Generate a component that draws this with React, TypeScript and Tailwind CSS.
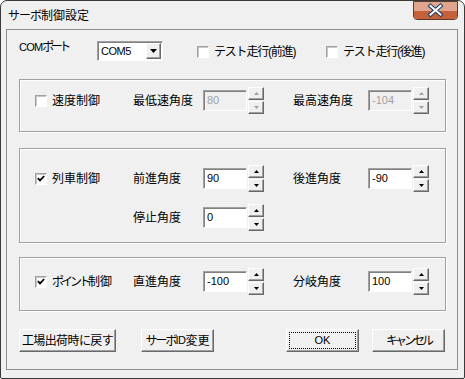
import React from 'react'

const font = "font-['Liberation_Sans','Noto_Sans_CJK_JP',sans-serif]"

const Arrow = ({ up, disabled }: { up?: boolean; disabled?: boolean }) => (
  <svg width="5" height="3" viewBox="0 0 5 3">
    <polygon
      points={up ? '2.5,0 5,3 0,3' : '0,0 5,0 2.5,3'}
      fill={disabled ? '#a0a0a0' : '#000'}
    />
  </svg>
)

const SpinButton = ({ up, disabled }: { up?: boolean; disabled?: boolean }) => (
  <div className="flex h-[13px] w-[16px] items-center justify-center border border-t-white border-l-white border-r-[#696969] border-b-[#696969] bg-[#f0f0f0] shadow-[inset_-1px_-1px_#a0a0a0]">
    <Arrow up={up} disabled={disabled} />
  </div>
)

const Spin = ({ value, disabled }: { value: string; disabled?: boolean }) => (
  <div className="flex items-center">
    <div
      className={
        'h-[21px] w-[44px] border border-t-[#a0a0a0] border-l-[#a0a0a0] border-r-white border-b-white pl-[3px] text-[11px] leading-[19px] shadow-[inset_1px_1px_#808080] ' +
        (disabled ? 'bg-[#f0f0f0] text-[#a0a0a0]' : 'bg-white text-black')
      }
    >
      {value}
    </div>
    <div className="ml-[1px] flex h-[27px] flex-col justify-between">
      <SpinButton up disabled={disabled} />
      <SpinButton disabled={disabled} />
    </div>
  </div>
)

const CheckBox = ({
  label,
  checked,
}: {
  label: React.ReactNode
  checked?: boolean
}) => (
  <div className="flex items-center whitespace-nowrap">
    <div className="flex h-[12px] w-[12px] shrink-0 items-center justify-center border border-t-[#a0a0a0] border-l-[#a0a0a0] border-r-white border-b-white bg-white shadow-[inset_1px_1px_#c8c8c8]">
      {checked && (
        <svg width="8" height="7" viewBox="0 0 8 7">
          <polyline
            points="0.8,3.2 3,5.4 7.2,1"
            fill="none"
            stroke="#000"
            strokeWidth="1.8"
          />
        </svg>
      )}
    </div>
    <span className="ml-[5px] text-[12px] leading-[14px]">{label}</span>
  </div>
)

const Button = ({
  label,
  width,
  focused,
}: {
  label: React.ReactNode
  width: string
  focused?: boolean
}) => (
  <div
    className={
      width +
      ' flex h-[23px] items-center justify-center whitespace-nowrap border border-t-white border-l-white border-r-[#696969] border-b-[#696969] bg-[#f0f0f0] p-[2px] text-[12px] shadow-[inset_-1px_-1px_#a0a0a0]'
    }
  >
    <div
      className={
        'flex h-full w-full items-center justify-center ' +
        (focused ? 'border border-dotted border-black' : '')
      }
    >
      {label}
    </div>
  </div>
)

const Row = ({
  check,
  label1,
  value1,
  label2,
  value2,
  disabled,
}: {
  check?: React.ReactNode
  label1: string
  value1: string
  label2?: string
  value2?: string
  disabled?: boolean
}) => (
  <div className="flex h-[27px] items-center">
    <div className="w-[98px]">{check}</div>
    <div className="w-[70px] whitespace-nowrap text-[12px]">{label1}</div>
    <Spin value={value1} disabled={disabled} />
    {label2 && (
      <>
        <div className="ml-[29px] w-[75px] whitespace-nowrap text-[12px]">
          {label2}
        </div>
        <Spin value={value2 ?? ''} disabled={disabled} />
      </>
    )}
  </div>
)

const Group = ({
  height,
  pt,
  mt,
  children,
}: {
  height: string
  pt: string
  mt: string
  children: React.ReactNode
}) => (
  <div
    className={
      'flex w-[427px] flex-col border border-[#a0a0a0] pl-[15px] shadow-[1px_1px_#fff,inset_1px_1px_#fff] ' +
      height +
      ' ' +
      pt +
      ' ' +
      mt
    }
  >
    {children}
  </div>
)

export default function App() {
  return (
    <div
      className={
        font +
        ' relative flex h-[379px] w-[465px] flex-col rounded-t-[7px] rounded-b-[2px] border border-[#3a3a3a] bg-[#f0f0f0] text-black'
      }
    >
      <div className="flex h-[28px] items-center whitespace-nowrap pl-[7px] pt-[1px] text-[12px]">
        <span className="tracking-[-1px]">サーボ</span>制御設定
      </div>
      <div className="absolute right-[6px] top-0 h-[19px] w-[45px] overflow-hidden rounded-b-[4px] border border-[#5a3a2c]">
        <div className="h-1/2 bg-[#dfa58d]" />
        <div className="h-1/2 bg-[#c4603a]" />
        <svg
          className="absolute left-0 top-0"
          width="43"
          height="17"
          viewBox="0 0 43 17"
        >
          <path
            d="M16.5 4 L26.5 12.5 M26.5 4 L16.5 12.5"
            stroke="#24406f"
            strokeWidth="4.2"
            strokeLinecap="square"
          />
          <path
            d="M16.5 4 L26.5 12.5 M26.5 4 L16.5 12.5"
            stroke="#fff"
            strokeWidth="2"
            strokeLinecap="square"
          />
        </svg>
      </div>

      <div className="ml-[5px] mr-[6px] flex h-[341px] flex-col border border-[#8e8e8e] pl-[12px] pt-[11px]">
        <div className="flex h-[20px] items-start">
          <span className="w-[78px] whitespace-nowrap text-[12px] leading-[13px]">
            <span className="text-[11px] tracking-[-0.8px]">COM</span>
            <span className="tracking-[-3.5px]">ポート</span>
          </span>
          <div className="flex h-[20px] w-[66px] items-center border border-t-[#a0a0a0] border-l-[#a0a0a0] border-r-white border-b-white bg-white shadow-[inset_1px_1px_#808080]">
            <span className="flex-1 pl-[3px] text-[11px] tracking-[-0.5px]">
              COM5
            </span>
            <div className="mr-[1px] flex h-[16px] w-[15px] items-center justify-center border border-t-white border-l-white border-r-[#696969] border-b-[#696969] bg-[#f0f0f0] shadow-[inset_-1px_-1px_#a0a0a0]">
              <svg width="7" height="4" viewBox="0 0 7 4">
                <polygon points="0,0 7,0 3.5,4" fill="#000" />
              </svg>
            </div>
          </div>
          <div className="ml-[34px] mt-[4px] w-[129px]">
            <CheckBox
              label={<span className="tracking-[-1.2px]">テスト走行(前進)</span>}
            />
          </div>
          <div className="mt-[4px]">
            <CheckBox
              label={<span className="tracking-[-1.2px]">テスト走行(後進)</span>}
            />
          </div>
        </div>

        <Group height="h-[53px]" pt="pt-[7px]" mt="mt-[18px]">
          <Row
            check={<CheckBox label="速度制御" />}
            label1="最低速角度"
            value1="80"
            label2="最高速角度"
            value2="-104"
            disabled
          />
        </Group>

        <Group height="h-[95px]" pt="pt-[16px]" mt="mt-[16px]">
          <Row
            check={<CheckBox label="列車制御" checked />}
            label1="前進角度"
            value1="90"
            label2="後進角度"
            value2="-90"
          />
          <div className="mt-[12px]">
            <Row label1="停止角度" value1="0" />
          </div>
        </Group>

        <Group height="h-[54px]" pt="pt-[10px]" mt="mt-[14px]">
          <Row
            check={
              <CheckBox
                checked
                label={
                  <>
                    <span className="tracking-[-3px]">ポイント</span>制御
                  </>
                }
              />
            }
            label1="直進角度"
            value1="-100"
            label2="分岐角度"
            value2="100"
          />
        </Group>

        <div className="mt-[18px] flex">
          <Button
            label={<span className="tracking-[-0.6px]">工場出荷時に戻す</span>}
            width="w-[97px]"
          />
          <div className="ml-[25px]">
            <Button
              label={
                <>
                  <span className="tracking-[-2px]">サーボ</span>
                  <span className="text-[11px] tracking-[-0.5px]">ID</span>
                  変更
                </>
              }
              width="w-[73px]"
            />
          </div>
          <div className="ml-[72px]">
            <Button
              label={<span className="text-[11px]">OK</span>}
              width="w-[73px]"
              focused
            />
          </div>
          <div className="ml-[13px]">
            <Button
              label={<span className="tracking-[-3px]">キャンセル</span>}
              width="w-[73px]"
            />
          </div>
        </div>
      </div>
    </div>
  )
}
